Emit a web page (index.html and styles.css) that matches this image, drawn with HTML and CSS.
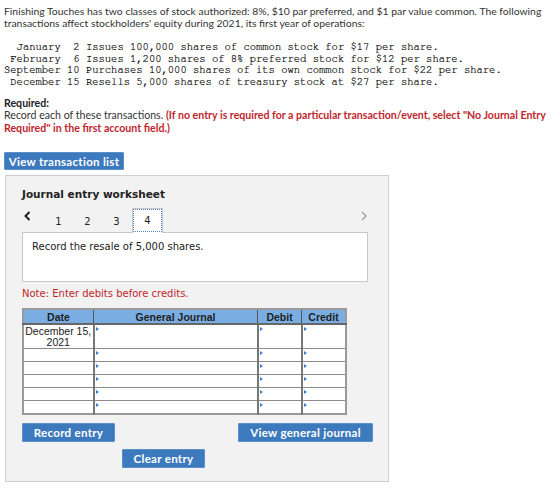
FILE: index.html
```html
<!DOCTYPE html>
<html lang="en">
<head>
    <meta charset="UTF-8">
    <meta name="viewport" content="width=device-width, initial-scale=1.0">
    <title>Journal Entry Worksheet</title>
    <link rel="stylesheet" href="styles.css">
</head>
<body>

<!-- Problem statement -->
<p class="intro">Finishing Touches has two classes of stock authorized: 8%, $10 par preferred, and $1 par value common. The following transactions affect stockholders' equity during 2021, its first year of operations:</p>

<pre class="events">  January  2 Issues 100,000 shares of common stock for $17 per share.
 February  6 Issues 1,200 shares of 8% preferred stock for $12 per share.
September 10 Purchases 10,000 shares of its own common stock for $22 per share.
 December 15 Resells 5,000 shares of treasury stock at $27 per share.</pre>

<div class="required">
    <div class="req-label">Required:</div>
    <div>Record each of these transactions. <span class="alert">(If no entry is required for a particular transaction/event, select "No Journal Entry Required" in the first account field.)</span></div>
</div>

<button class="btn btn-list">View transaction list</button>

<!-- Worksheet panel -->
<div class="worksheet">
    <h3>Journal entry worksheet</h3>

    <div class="tabs">
        <span class="arrow prev">
            <svg width="7" height="10" viewBox="0 0 7 10"><path d="M5.5 1 L1.5 5 L5.5 9" fill="none" stroke="#222" stroke-width="2"/></svg>
        </span>
        <span class="tab">1</span>
        <span class="tab">2</span>
        <span class="tab">3</span>
        <span class="tab active">4</span>
        <span class="arrow next">
            <svg width="6" height="10" viewBox="0 0 6 10"><path d="M1 1 L5 5 L1 9" fill="none" stroke="#9a9a9a" stroke-width="1.2"/></svg>
        </span>
    </div>

    <div class="prompt">Record the resale of 5,000 shares.</div>

    <p class="note">Note: Enter debits before credits.</p>

    <table class="journal">
        <thead>
            <tr>
                <th class="c-date">Date</th>
                <th class="c-acct">General Journal</th>
                <th class="c-num">Debit</th>
                <th class="c-num">Credit</th>
            </tr>
        </thead>
        <tbody>
            <tr class="first">
                <td class="date">December 15,<br>2021</td>
                <td class="cell"></td>
                <td class="cell"></td>
                <td class="cell"></td>
            </tr>
            <tr><td></td><td class="cell"></td><td class="cell"></td><td class="cell"></td></tr>
            <tr><td></td><td class="cell"></td><td class="cell"></td><td class="cell"></td></tr>
            <tr><td></td><td class="cell"></td><td class="cell"></td><td class="cell"></td></tr>
            <tr><td></td><td class="cell"></td><td class="cell"></td><td class="cell"></td></tr>
            <tr><td></td><td class="cell"></td><td class="cell"></td><td class="cell"></td></tr>
        </tbody>
    </table>

    <div class="actions">
        <button class="btn btn-record">Record entry</button>
        <button class="btn btn-view">View general journal</button>
    </div>
    <div class="actions-clear">
        <button class="btn btn-clear">Clear entry</button>
    </div>
</div>

</body>
</html>
```

FILE: styles.css
```css
/* Page text */
body {
    margin: 0;
    padding: 4px 4px 0 4px;
    font-family: Lato, "Liberation Sans", sans-serif;
    font-size: 10.6px;
    color: #333;
    background: #fff;
}
.intro {
    margin: 0;
    padding-top: 2px;
    font-size: 10.4px;
    line-height: 11.5px;
}
.events {
    margin: 13px 0 0 0;
    font-family: "Nimbus Mono PS", "FreeMono", "Liberation Mono", monospace;
    font-size: 10.5px;
    line-height: 11.7px;
    color: #000;
    -webkit-text-stroke: 0.2px #000;
}
.required {
    margin-top: 8px;
    line-height: 12.5px;
}
.req-label {
    font-weight: bold;
    color: #222;
}
.alert {
    color: #c0262d;
    font-weight: bold;
}

/* Blue buttons */
.btn {
    display: block;
    font-family: Lato, "Liberation Sans", sans-serif;
    font-weight: bold;
    font-size: 11.5px;
    color: #fff;
    background: #3d7abd;
    border: 1px solid #5a8fc8;
    border-radius: 1px;
    padding: 0;
    height: 19px;
    cursor: pointer;
    letter-spacing: 0.3px;
}
.btn-list {
    margin-top: 18px;
    width: 120px;
    height: 18px;
}

/* Worksheet panel */
.worksheet {
    margin: 5px 0 0 1px;
    width: 366px;
    height: 305px;
    background: #f2f2f2;
    border: 1px solid #cfcfcf;
    padding: 0 0 0 16px;
    font-family: "DejaVu Sans", Verdana, sans-serif;
}
.worksheet h3 {
    margin: 11px 0 0 0;
    font-size: 10.5px;
    font-weight: bold;
    color: #222;
    line-height: 14px;
}
.tabs {
    display: flex;
    align-items: flex-end;
    width: 345px;
    height: 25px;
    margin: 7px 0 -1px 0;
    position: relative;
    z-index: 1;
}
.tab {
    width: 29px;
    text-align: center;
    font-size: 10px;
    color: #222;
    line-height: 18px;
    padding-bottom: 2px;
}
.arrow {
    display: flex;
    align-items: center;
    height: 20px;
    padding-bottom: 7px;
}
.prev {
    width: 20px;
    padding-left: 2px;
}
.next {
    margin-left: auto;
    padding-right: 0;
}
.tab.active {
    width: 31px;
    height: 25px;
    line-height: 23px;
    margin-left: 1px;
    padding-bottom: 0;
    background: #fff;
    border: 1px solid #c8c8c8;
    border-bottom: none;
    outline: 1px dotted #4a7fc0;
    outline-offset: -2px;
    box-sizing: border-box;
}
.prompt {
    width: 346px;
    height: 50px;
    box-sizing: border-box;
    background: #fff;
    border: 1px solid #c8c8c8;
    padding: 7px 9px;
    font-size: 10px;
    color: #222;
    line-height: 14px;
}
.note {
    margin: 5px 0 0 0;
    font-size: 10px;
    color: #c0262d;
    line-height: 14px;
}

/* Journal table */
.journal {
    margin-top: 7px;
    border-collapse: collapse;
    font-family: "Liberation Sans", Arial, sans-serif;
    font-size: 10.5px;
    background: #fff;
    border: 2px solid #9a9a9a;
}
.journal thead tr { height: 15px; }
.journal tr.first { height: 24px; }
.journal tbody tr { height: 13px; }
.journal th {
    background: #7aaee2;
    color: #1f1f1f;
    font-weight: bold;
    padding: 0;
    border: 1px solid #555;
    border-bottom: 2px solid #666;
    line-height: 12px;
}
.journal td {
    padding: 0;
    border-top: 1px solid #8c8c8c;
    border-bottom: 1px solid #8c8c8c;
    border-left: 2px solid #777;
    position: relative;
}
.journal .c-date { width: 69px; }
.journal .c-acct { width: 163px; }
.journal .c-num { width: 43px; }
.journal tr.first td {
    vertical-align: top;
}
.journal td.date {
    text-align: center;
    color: #222;
    line-height: 11px;
    padding-top: 1px;
}
.journal td:first-child {
    border-left: none;
}

/* small blue marker in each entry cell */
.cell::before {
    content: "";
    position: absolute;
    top: 2px;
    left: 1px;
    border-left: 3px solid #3d7fd0;
    border-top: 2px solid transparent;
    border-bottom: 2px solid transparent;
}

/* Panel buttons */
.actions {
    display: flex;
    justify-content: space-between;
    width: 351px;
    margin-top: 8px;
}
.btn-record {
    width: 93px;
}
.btn-view {
    width: 135px;
}
.actions-clear {
    margin-top: 7px;
    padding-left: 100px;
}
.btn-clear {
    width: 83px;
}
```
